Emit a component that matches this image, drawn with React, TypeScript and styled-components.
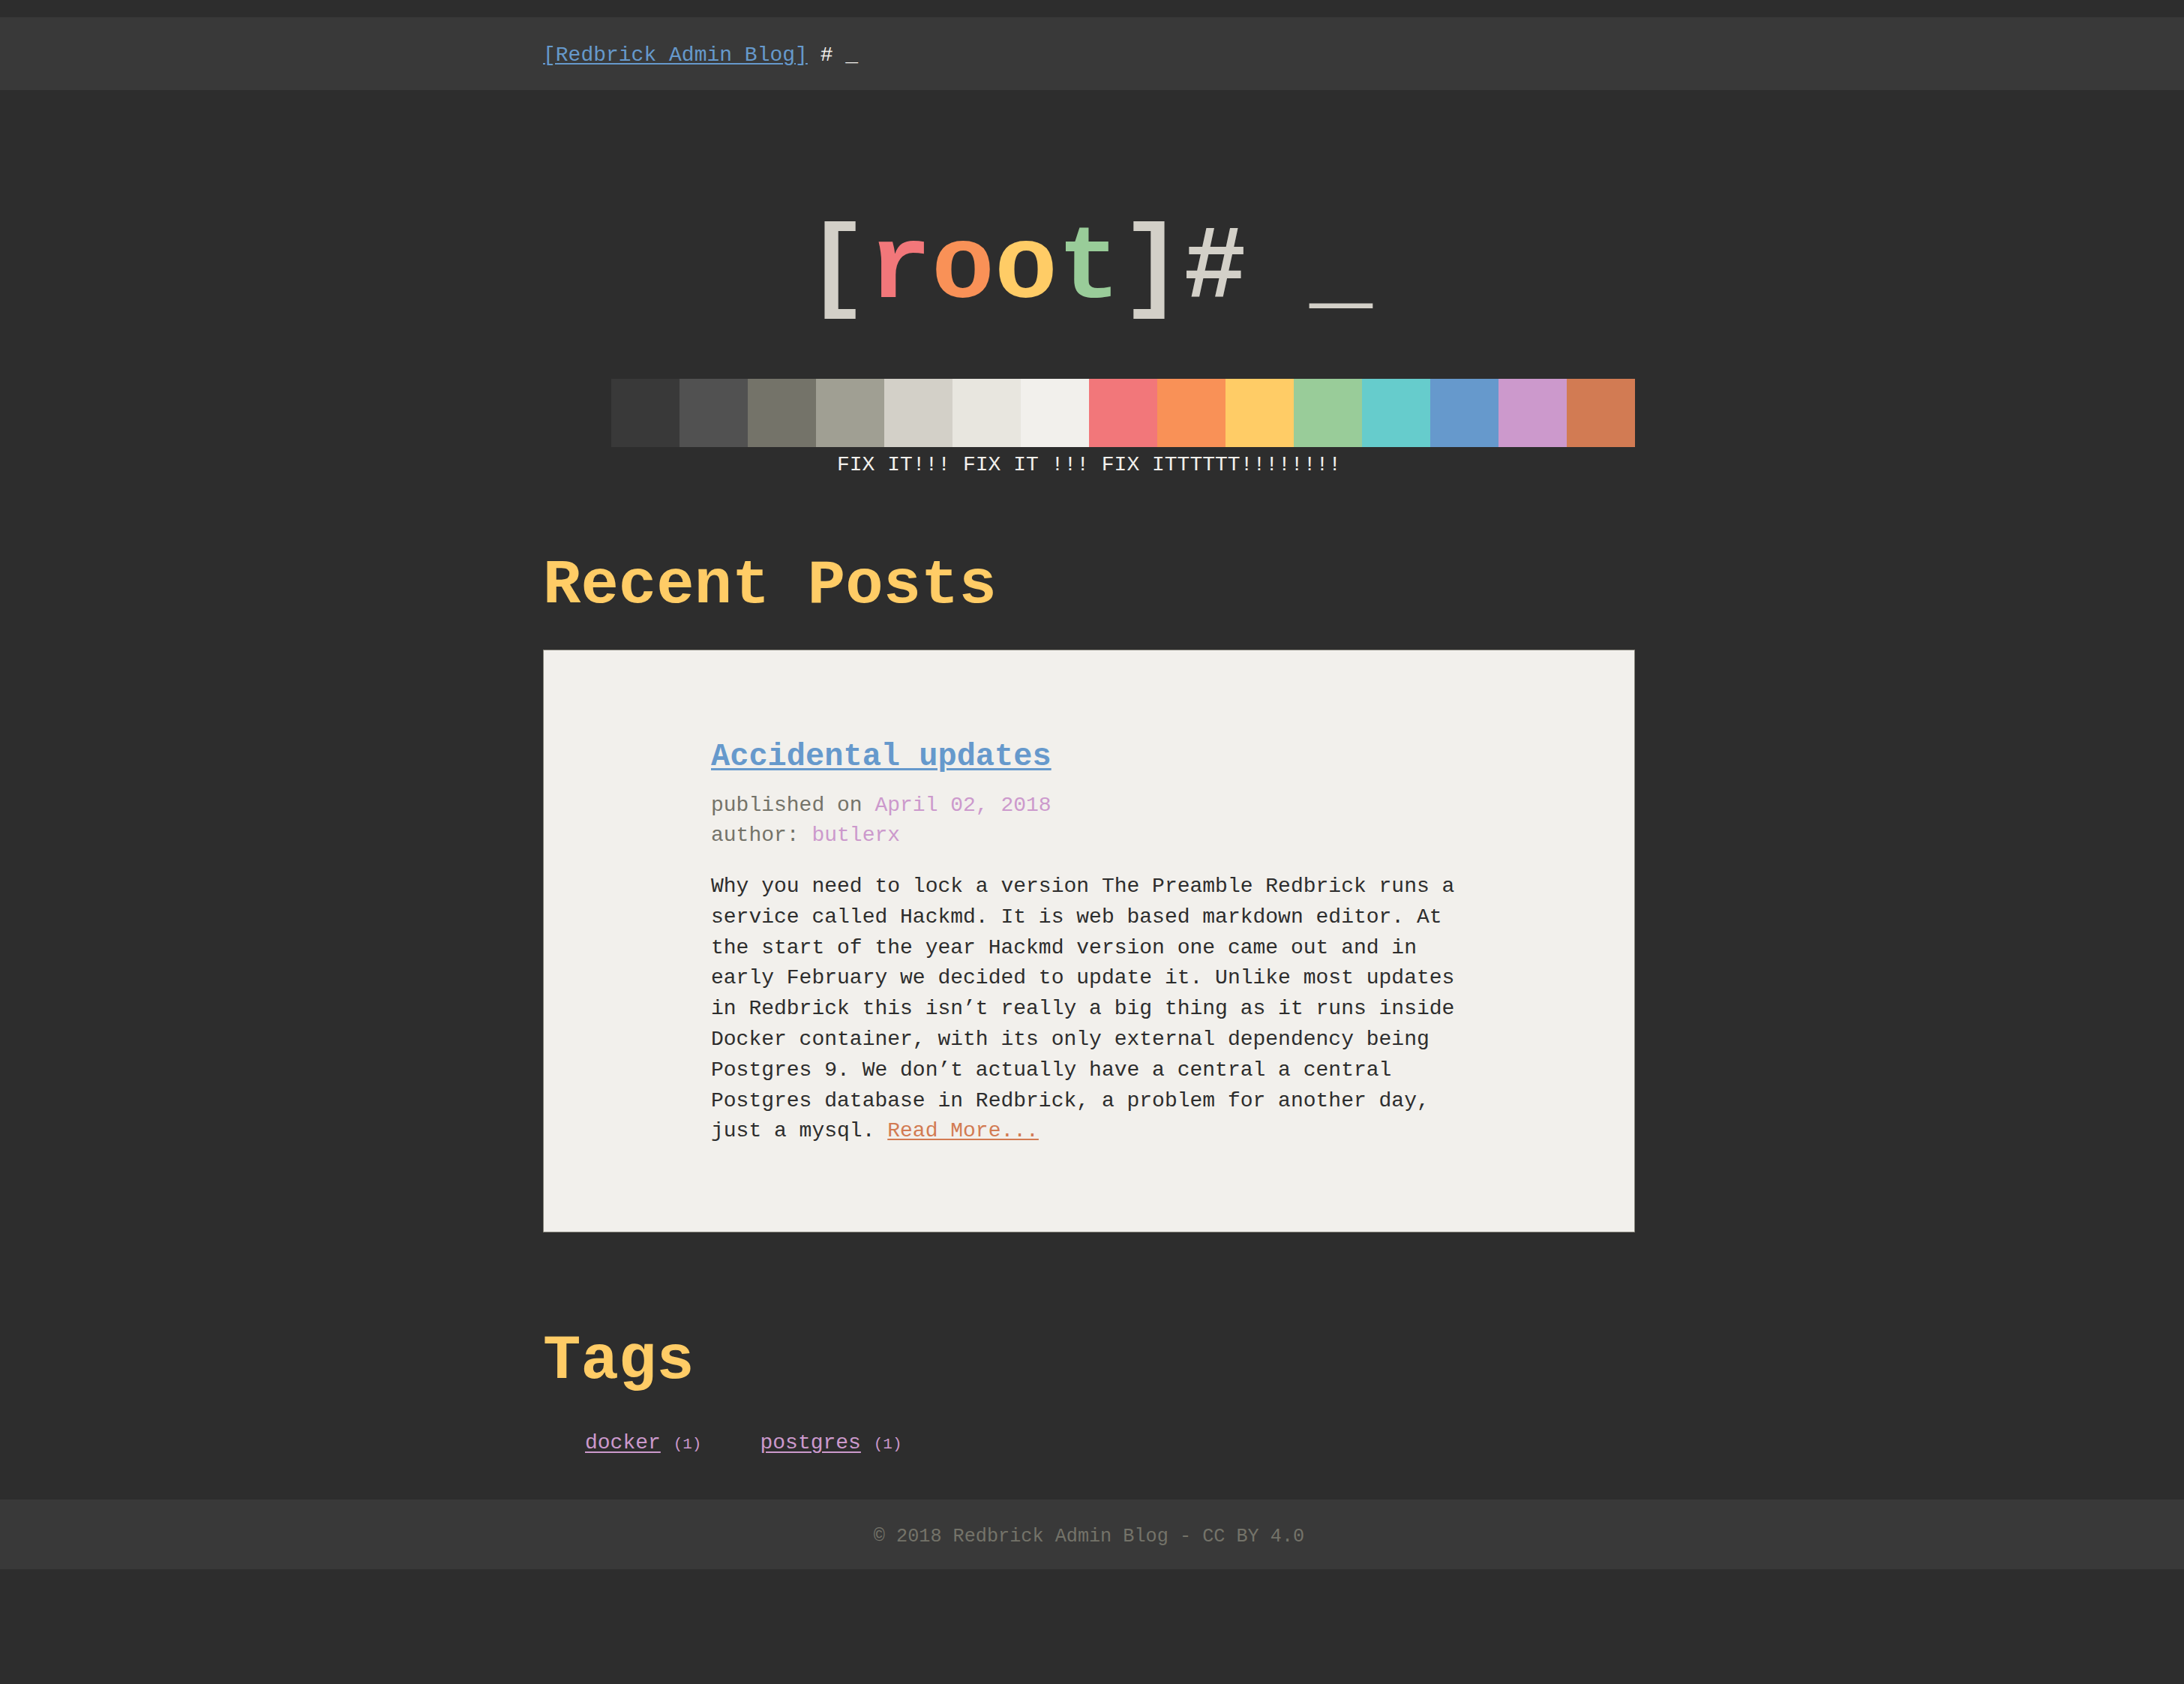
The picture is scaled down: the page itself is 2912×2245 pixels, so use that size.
import React from "react";
import styled, { createGlobalStyle } from "styled-components";

const mono = `"Liberation Mono", "DejaVu Sans Mono", monospace`;

const GlobalStyle = createGlobalStyle`
  html, body {
    margin: 0;
    padding: 0;
    background: #2d2d2d;
  }
  body {
    font-family: ${mono};
    font-size: 28px;
    color: #d3d0c8;
  }
  * { box-sizing: border-box; }
`;

const Page = styled.div`
  padding-top: 23px;
  background: #2d2d2d;
`;

const Band = styled.div<{ $bg?: string }>`
  background: ${(p) => p.$bg || "transparent"};
  padding-right: 8px;
`;

const Column = styled.div`
  width: 1456px;
  margin: 0 auto;
`;

const HeaderBar = styled(Column)`
  padding: 30px 0 26px;
  line-height: 41px;
  font-size: 28px;
  color: #f2f0ec;
  white-space: pre;
`;

const HomeLink = styled.a`
  color: #6699cc;
  text-decoration: underline;
  text-underline-offset: 3px;
`;

const Title = styled.h1`
  margin: 169px 0 0;
  font-size: 140px;
  line-height: 140px;
  font-weight: 700;
  text-align: center;
  color: #d3d0c8;
  white-space: pre;
`;

const Letter = styled.span<{ $c: string }>`
  color: ${(p) => p.$c};
`;

const SwatchRow = styled.div`
  display: flex;
  margin-top: 76px;
`;

const Swatch = styled.div<{ $c: string }>`
  width: 91px;
  height: 91px;
  background: ${(p) => p.$c};
`;

const Caption = styled.p`
  margin: 3px 0 0;
  font-size: 28px;
  line-height: 41px;
  text-align: center;
  color: #f2f0ec;
  white-space: pre;
`;

const SectionTitle = styled.h2<{ $mt: number }>`
  margin: ${(p) => p.$mt}px 0 0;
  font-size: 84px;
  line-height: 100px;
  font-weight: 700;
  color: #ffcc66;
`;

const Card = styled.article`
  margin-top: 35px;
  background: #f2f0ec;
  border: 1px solid #85847b;
  padding: 117px 223px 113px;
`;

const PostTitle = styled.h3`
  margin: 0;
  font-size: 42px;
  line-height: 50px;
  font-weight: 700;
`;

const PostLink = styled.a`
  color: #6699cc;
  text-decoration: underline;
  text-decoration-thickness: 3px;
  text-underline-offset: 4px;
`;

const Meta = styled.div`
  margin-top: 20px;
  font-size: 28px;
  line-height: 40px;
  color: #747369;
`;

const Accent = styled.span`
  color: #cc99cc;
`;

const Body = styled.p`
  margin: 28px 0 0;
  max-width: 1008px;
  font-size: 28px;
  line-height: 40.8px;
  color: #2d2d2d;
`;

const ReadMore = styled.a`
  color: #d27b53;
  text-decoration: underline;
  text-underline-offset: 3px;
`;

const TagList = styled.ul`
  list-style: none;
  margin: 38px 0 0;
  padding: 0 0 0 56px;
  display: flex;
  gap: 78px;
  line-height: 41px;
`;

const TagItem = styled.li`
  color: #cc99cc;
  white-space: pre;
`;

const TagLink = styled.a`
  color: #cc99cc;
  text-decoration: underline;
  text-underline-offset: 4px;
`;

const TagCount = styled.span`
  font-size: 21px;
`;

const FooterText = styled(Column)`
  margin-top: 53px;
`;

const FooterInner = styled(Column)`
  padding: 29px 0 23px;
  font-size: 25.2px;
  line-height: 41px;
  text-align: center;
  color: #747369;
`;

const swatches = [
  "#2d2d2d",
  "#393939",
  "#515151",
  "#747369",
  "#a09f93",
  "#d3d0c8",
  "#e8e6df",
  "#f2f0ec",
  "#f2777a",
  "#f99157",
  "#ffcc66",
  "#99cc99",
  "#66cccc",
  "#6699cc",
  "#cc99cc",
  "#d27b53",
];

const tags = [
  { name: "docker", count: 1 },
  { name: "postgres", count: 1 },
];

export default function App() {
  return (
    <>
      <GlobalStyle />
      <Page>
        <Band $bg="#393939">
          <HeaderBar>
            <HomeLink href="#">[Redbrick Admin Blog]</HomeLink> # _
          </HeaderBar>
        </Band>
        <Band>
          <Column>
            <Title>
              [<Letter $c="#f2777a">r</Letter>
              <Letter $c="#f99157">o</Letter>
              <Letter $c="#ffcc66">o</Letter>
              <Letter $c="#99cc99">t</Letter>]# _
            </Title>
            <SwatchRow>
              {swatches.map((c) => (
                <Swatch key={c} $c={c} />
              ))}
            </SwatchRow>
            <Caption>FIX IT!!! FIX IT !!! FIX ITTTTTT!!!!!!!!</Caption>
            <SectionTitle $mt={91}>Recent Posts</SectionTitle>
            <Card>
              <PostTitle>
                <PostLink href="#">Accidental updates</PostLink>
              </PostTitle>
              <Meta>
                published on <Accent>April 02, 2018</Accent>
                <br />
                author: <Accent>butlerx</Accent>
              </Meta>
              <Body>
                Why you need to lock a version The Preamble Redbrick runs a
                service called Hackmd. It is web based markdown editor. At the
                start of the year Hackmd version one came out and in early
                February we decided to update it. Unlike most updates in
                Redbrick this isn’t really a big thing as it runs inside Docker
                container, with its only external dependency being Postgres 9.
                We don’t actually have a central a central Postgres database in
                Redbrick, a problem for another day, just a mysql.{" "}
                <ReadMore href="#">Read More...</ReadMore>
              </Body>
            </Card>
            <SectionTitle $mt={122}>Tags</SectionTitle>
            <TagList>
              {tags.map((t) => (
                <TagItem key={t.name}>
                  <TagLink href="#">{t.name}</TagLink>{" "}
                  <TagCount>({t.count})</TagCount>
                </TagItem>
              ))}
            </TagList>
          </Column>
        </Band>
        <FooterText />
        <Band $bg="#393939">
          <FooterInner>© 2018 Redbrick Admin Blog - CC BY 4.0</FooterInner>
        </Band>
      </Page>
    </>
  );
}
